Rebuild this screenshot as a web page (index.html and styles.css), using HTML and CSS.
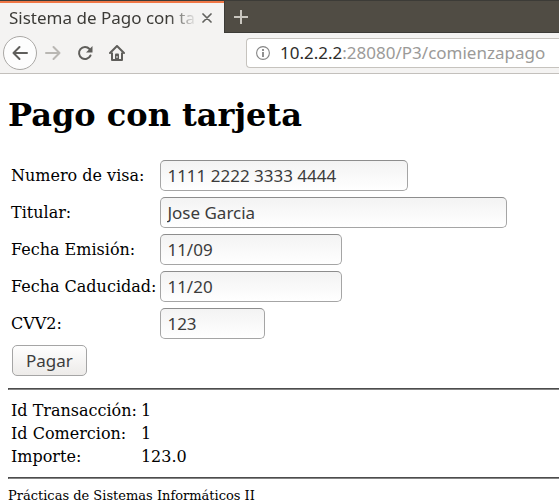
FILE: index.html
```
<!DOCTYPE html>
<html lang="es">
<head>
<meta charset="utf-8">
<title>Sistema de Pago con tarjeta</title>
<link rel="stylesheet" href="styles.css">
</head>
<body>
<header class="browser">
  <div class="tabs">
    <div class="tab">
      <span class="tab-title">Sistema de Pago con tarjeta</span>
      <button class="tab-close" type="button" aria-label="Cerrar">
        <svg width="10" height="10" viewBox="0 0 10 10"><path d="M1 1l8 8M9 1L1 9" fill="none" stroke="#62625f" stroke-width="1.7" stroke-linecap="round"/></svg>
      </button>
    </div>
    <div class="tab-rest">
      <button class="tab-new" type="button" aria-label="Nueva">
        <svg width="14" height="14" viewBox="0 0 14 14"><path d="M7 0v14M0 7h14" fill="none" stroke="#c9c6bf" stroke-width="2"/></svg>
      </button>
    </div>
  </div>
  <div class="toolbar">
    <button class="nav back" type="button" aria-label="Atrás">
      <svg width="16" height="16" viewBox="0 0 16 16"><path d="M15 8H1.5M7.5 2l-6 6 6 6" fill="none" stroke="#5f5e5b" stroke-width="2" stroke-linecap="round" stroke-linejoin="round"/></svg>
    </button>
    <button class="nav" type="button" aria-label="Adelante" disabled>
      <svg width="16" height="16" viewBox="0 0 16 16"><path d="M1 8h13.500M8.500 2l6 6-6 6" fill="none" stroke="#b9b7b3" stroke-width="2" stroke-linecap="round" stroke-linejoin="round"/></svg>
    </button>
    <button class="nav" type="button" aria-label="Recargar">
      <svg width="16" height="16" viewBox="0 0 16 16"><path d="M13.500 10.500A6 6 0 1 1 12.500 4" fill="none" stroke="#5f5e5b" stroke-width="2" stroke-linecap="round"/><path d="M15.500 1v6.500H9z" fill="#5f5e5b"/></svg>
    </button>
    <button class="nav" type="button" aria-label="Inicio">
      <svg width="16" height="16" viewBox="0 0 16 16"><path d="M1 8l7-7 7 7" fill="none" stroke="#5f5e5b" stroke-width="2" stroke-linecap="round" stroke-linejoin="round"/><path d="M3 7.500V15h10V7.500" fill="none" stroke="#5f5e5b" stroke-width="2" stroke-linejoin="round"/><path d="M6 15V9.500Q6 8.500 7 8.500h2Q10 8.500 10 9.500V15z" fill="#5f5e5b"/><path d="M8 11v2" stroke="#f4f3f2" stroke-width="1"/></svg>
    </button>
    <div class="address">
      <svg width="14" height="14" viewBox="0 0 14 14"><circle cx="7" cy="7" r="6.400" fill="none" stroke="#858585" stroke-width="1.100"/><path d="M7 6v5M7 3v2" stroke="#858585" stroke-width="1.800"/></svg>
      <span class="url"><b>10.2.2.2</b>:28080/P3/comienzapago</span>
    </div>
  </div>
</header>
<main class="page">
  <h1>Pago con tarjeta</h1>
  <form>
    <table class="fields">
      <tr><td><label for="visa">Numero de visa:</label></td><td><input id="visa" class="medium" type="text" value="1111 2222 3333 4444"></td></tr>
      <tr><td><label for="titular">Titular:</label></td><td><input id="titular" class="wide" type="text" value="Jose Garcia"></td></tr>
      <tr><td><label for="emision">Fecha Emisión:</label></td><td><input id="emision" class="short" type="text" value="11/09"></td></tr>
      <tr><td><label for="caducidad">Fecha Caducidad:</label></td><td><input id="caducidad" class="short" type="text" value="11/20"></td></tr>
      <tr><td><label for="cvv">CVV2:</label></td><td><input id="cvv" class="tiny" type="text" value="123"></td></tr>
      <tr><td colspan="2"><button class="pay" type="button">Pagar</button></td></tr>
    </table>
  </form>
  <hr>
  <table class="summary">
    <tr><td>Id Transacción:</td><td>1</td></tr>
    <tr><td>Id Comercion:</td><td>1</td></tr>
    <tr><td>Importe:</td><td>123.0</td></tr>
  </table>
  <hr>
  <footer>Prácticas de Sistemas Informáticos II</footer>
</main>
</body>
</html>
```
FILE: styles.css
```
* {
  box-sizing: border-box;
}

body {
  margin: 0;
  background: #fff;
  color: #000;
  font: 16px/19px "DejaVu Serif", serif;
  overflow: hidden;
}

button {
  padding: 0;
  border: 0;
  background: none;
}

svg {
  display: block;
}

.browser {
  background: #f4f3f2;
  border-bottom: 1px solid #c3c0bc;
  color: #3c3b37;
  font: 17px/20px "Noto Sans", sans-serif;
}

.tabs {
  display: flex;
  height: 33px;
  border-top: 1px solid #3c3b37;
  background: #f4f3f2;
}

.tab {
  display: flex;
  align-items: center;
  flex: 0 0 224px;
  min-width: 0;
  padding: 0 12px 0 9px;
  border-top: 2px solid #f07746;
}

.tab-title {
  flex: 1;
  min-width: 0;
  overflow: hidden;
  margin-right: 6px;
  white-space: nowrap;
  mask-image: linear-gradient(to right, #000 160px, transparent 188px);
}

.tab-rest {
  display: flex;
  flex: 1;
  align-items: center;
  padding-left: 9px;
  border-left: 1px solid #3c3b37;
  border-bottom: 1px solid #3c3b37;
  background: #504c44;
}

.toolbar {
  display: flex;
  align-items: center;
  height: 40px;
  padding-left: 3px;
}

.nav {
  display: flex;
  align-items: center;
  justify-content: center;
  width: 32px;
  height: 34px;
}

.back {
  width: 34px;
  border: 1px solid #aaa8a5;
  border-radius: 50%;
  background: #fdfdfd;
}

.address {
  display: flex;
  flex: 1;
  align-items: center;
  gap: 10px;
  height: 30px;
  margin-left: 113px;
  padding-left: 9px;
  border: 1px solid #c6c3be;
  border-right: 0;
  border-radius: 4px 0 0 4px;
  background: #fff;
  color: #9b9a98;
}

.url {
  white-space: nowrap;
}

.url b {
  color: #2e2d2b;
  font-weight: 400;
}

.page {
  padding: 21px 0 0 8px;
}

h1 {
  margin: 0 0 21px;
  font-size: 32px;
  line-height: 40px;
}

table {
  border-spacing: 2px;
}

td {
  padding: 1px;
}

.fields td {
  height: 35px;
}

.fields input,
.pay {
  display: block;
  height: 31px;
  border: 1px solid #a5a5a5;
  border-radius: 5px;
  color: #3c3c3c;
  font: 17px/20px "Noto Sans", sans-serif;
}

.fields input {
  padding: 0 6px;
  border-top-color: #8d8d8d;
  background: linear-gradient(#f3f3f3, #fff);
}

.medium {
  width: 248px;
}

.wide {
  width: 347px;
}

.short {
  width: 182px;
}

.tiny {
  width: 105px;
}

.pay {
  margin-left: 1px;
  padding: 0 13px;
  background: linear-gradient(#fefefe, #edebe9);
}

hr {
  margin: 8px 0;
  border: 1px solid #4c4c4c;
  border-bottom-color: #858585;
  border-right: 0;
}

footer {
  font-size: 13px;
  line-height: 18px;
}
```
